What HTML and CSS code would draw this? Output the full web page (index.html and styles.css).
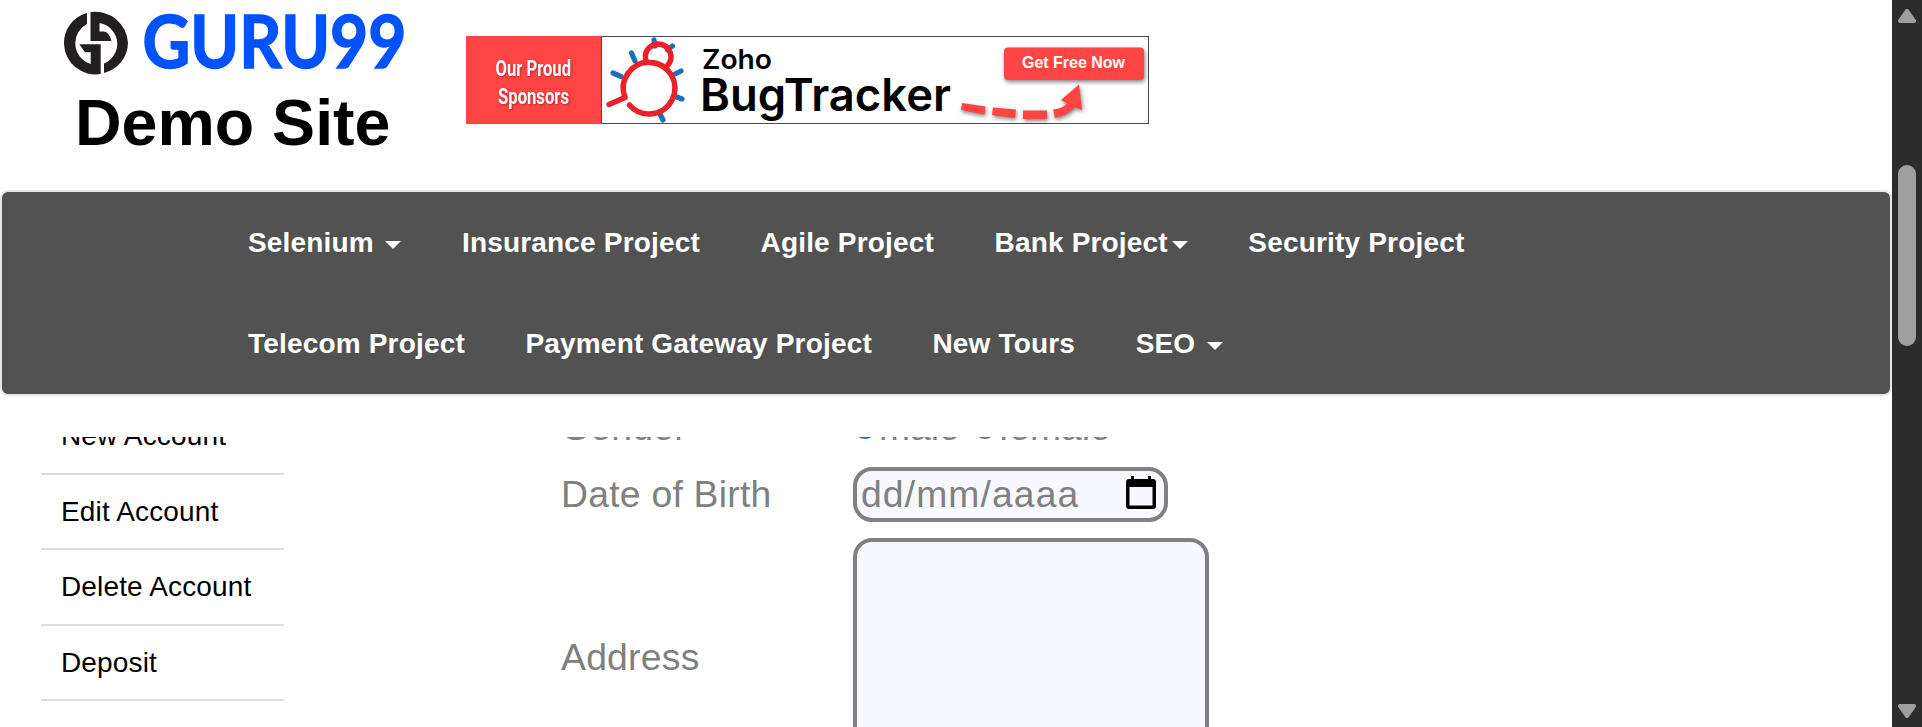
FILE: index.html
```html
<!DOCTYPE html>
<html lang="en">
<head>
<meta charset="utf-8">
<title>Guru99 Demo Site</title>
<link rel="stylesheet" href="styles.css">
</head>
<body>
<div class="page">
  <header class="top">
    <div class="brand">
      <svg class="logo" viewBox="0 0 380 76" width="380" height="76">
        <g fill="#231f20">
          <path d="M45 13A31 31 0 0 0 22 44A31.500 31.500 0 0 0 58.700 74V44.300H37.300L43 52.300H48.700V64A21.500 21.500 0 0 1 33.300 43.500A21.500 21.500 0 0 1 45 24Z"/>
          <path d="M48.500 12A33 33 0 0 1 86 43A31.500 31.500 0 0 1 62 73V63.500A21.500 21.500 0 0 0 75.300 43A21.500 21.500 0 0 0 57.500 23V31.500H62Q67 32 69.500 41H48.500Z"/>
        </g>
        <text class="logo-text" x="100.500" y="68" textLength="264" lengthAdjust="spacingAndGlyphs">GURU99</text>
      </svg>
      <h1 class="site-name">Demo Site</h1>
    </div>
    <svg class="banner" viewBox="466 36 683 88" width="683" height="88">
      <rect x="466" y="36" width="683" height="88" fill="#fff"/>
      <rect x="601.500" y="36.500" width="547" height="87" fill="#fff" stroke="#4a4a4a"/>
      <rect x="466" y="36" width="135" height="88" fill="#ff4444"/>
      <g class="sponsor">
        <text x="495.500" y="75.500" textLength="75.500" lengthAdjust="spacingAndGlyphs">Our Proud</text>
        <text x="498" y="104" textLength="71" lengthAdjust="spacingAndGlyphs">Sponsors</text>
      </g>
      <g fill="none" stroke-width="5.200" stroke-linecap="round" stroke="#1f6fb8">
        <path d="M654 40l1 6M672.500 46l-5 4M631.500 53l3.500 8M613 73l8 3.500M681 71l-8 4M682 99l-8-3M659 112l4 8"/>
      </g>
      <g fill="none" stroke="#e8212a" stroke-width="5.500" stroke-linecap="round" stroke-linejoin="round">
        <path d="M609 104.500L625 97.500A25.800 25.800 0 1 1 629.500 105"/>
        <path d="M645.500 58.500A12.800 12.800 0 1 1 668 65"/>
      </g>
      <text class="zoho" x="702" y="69" textLength="70" lengthAdjust="spacingAndGlyphs">Zoho</text>
      <text class="bug" x="700" y="111" textLength="251" lengthAdjust="spacingAndGlyphs">BugTracker</text>
      <g class="shadowed" fill="#ff4444">
        <rect x="1004" y="47.500" width="140" height="32.500" rx="4"/>
        <path d="M962 103l23.500 3.500-1 8-23.500-4.500zM993 107.500l23 2-1 8.500-23-3zM1023 110.500h24v8.500h-24zM1053 109.500q10-1 14-6l-6-3.500 18-15.500 3 25.500-7-3q-7 8-20 11z"/>
      </g>
      <text class="cta" x="1022" y="68" textLength="103" lengthAdjust="spacingAndGlyphs">Get Free Now</text>
    </svg>
  </header>
  <nav class="nav">
    <ul class="nav-row">
      <li>Selenium <i class="caret spaced"></i></li>
      <li>Insurance Project</li>
      <li>Agile Project</li>
      <li>Bank Project<i class="caret"></i></li>
      <li>Security Project</li>
    </ul>
    <ul class="nav-row">
      <li>Telecom Project</li>
      <li>Payment Gateway Project</li>
      <li>New Tours</li>
      <li>SEO <i class="caret spaced"></i></li>
    </ul>
  </nav>
  <main class="content">
    <ul class="side">
      <li>New Account</li>
      <li>Edit Account</li>
      <li>Delete Account</li>
      <li>Deposit</li>
    </ul>
    <form class="form">
      <div class="row gender">
        <span class="label">Gender</span>
        <span class="choices"><i class="radio on"></i><span class="male">male</span><i class="radio"></i><span>female</span></span>
      </div>
      <div class="row dob">
        <span class="label">Date of Birth</span>
        <div class="date"><span>dd/mm/aaaa</span>
          <svg class="calendar" viewBox="0 0 30 33" width="30" height="33">
            <path fill-rule="evenodd" d="M5 0h3v3h14V0h3v3h2q3 0 3 3v24q0 3-3 3H3q-3 0-3-3V6q0-3 3-3h2zM3.500 11v18.500h23V11z"/>
          </svg>
        </div>
      </div>
      <div class="row address">
        <span class="label">Address</span>
        <div class="area"></div>
      </div>
    </form>
  </main>
</div>
<aside class="scrollbar">
  <svg viewBox="0 0 18 14" width="18" height="14"><path d="M9 2L16 12H2z"/></svg>
  <div class="thumb"></div>
  <svg viewBox="0 0 18 14" width="18" height="14"><path d="M2 2H16L9 12z"/></svg>
</aside>
</body>
</html>
```
FILE: styles.css
```css
* { box-sizing: border-box; }
body { margin: 0; height: 727px; display: flex; overflow: hidden; background: #fff; font-family: "Liberation Sans", Arial, sans-serif; }
ul { list-style: none; margin: 0; padding: 0; }
.page { width: 1892px; height: 727px; display: flex; flex-direction: column; overflow: hidden; }
.top { height: 190px; flex: none; display: flex; align-items: flex-start; }
.brand { width: 466px; padding-left: 42px; flex: none; }
.logo { display: block; }
.logo-text { font: 700 72px Lato, sans-serif; fill: #0052ff; stroke: #0052ff; stroke-width: 1.500px; }
.site-name { margin: 10px 0 0 33px; font-size: 64.500px; line-height: 74px; font-weight: 700; white-space: nowrap; }
.banner { display: block; margin-top: 36px; }
.sponsor { font: 700 22.500px Roboto, sans-serif; fill: #fff; filter: drop-shadow(1px 1px 1px rgba(80, 0, 0, .4)); }
.zoho { font: 600 27px Inter, sans-serif; }
.bug { font: 600 45px Inter, sans-serif; }
.cta { font: 700 16px "Liberation Sans", sans-serif; fill: #fff; }
.shadowed { filter: drop-shadow(1px 2px 2px rgba(0, 0, 0, .5)); }
.nav { height: 206px; flex: none; border: 2px solid #e7e7e7; border-radius: 8px; background: #525252; color: #fff; padding-left: 246px; font-size: 28px; font-weight: 700; letter-spacing: .18px; }
.nav-row { display: flex; gap: 60.500px; height: 101px; padding-top: 35px; line-height: 32px; }
.nav-row li { white-space: nowrap; display: flex; }
.caret { border: 8px solid transparent; border-top-color: #fff; border-bottom: 0; align-self: flex-start; margin: 14px 0 0 4px; }
.caret.spaced { margin-left: 11.500px; }
.content { margin-top: 41px; height: 290px; overflow: hidden; display: flex; }
.side { width: 243px; margin: -38px 0 0 41px; font-size: 28px; line-height: 32px; letter-spacing: .15px; flex: none; }
.side li { height: 75.500px; border-bottom: 2px solid #ddd; padding: 21px 0 0 20px; }
.form { margin: -36px 0 0 277px; color: #808080; font-size: 37.300px; line-height: 44px; flex: none; }
.row { display: flex; }
.label { width: 292px; flex: none; letter-spacing: .25px; }
.gender { height: 66px; padding-top: 4px; }
.choices { display: flex; }
.radio { width: 24px; height: 24px; border: 3px solid #767676; border-radius: 50%; margin: 10px 2px 0 0; }
.radio.on { border-color: #0075ff; }
.male { margin-right: 13px; }
.dob { height: 71px; align-items: flex-start; }
.dob .label { padding-top: 5px; }
.date { width: 315px; height: 55px; border: 4px solid #808080; border-radius: 19px; background: #f8f8ff; display: flex; justify-content: space-between; padding: 1px 8px 0 4px; letter-spacing: 1.100px; }
.calendar { margin-top: 4px; fill: #000; }
.address { height: 240px; }
.address .label { padding-top: 97px; }
.area { width: 356px; height: 240px; border: 4px solid #808080; border-radius: 19px; background: #f8f8ff; }
.scrollbar { width: 30px; height: 727px; background: #2c2c2c; display: flex; flex-direction: column; padding: 9px 6px; }
.scrollbar svg { fill: #9f9f9f; stroke: #9f9f9f; stroke-width: 4px; stroke-linejoin: round; }
.thumb { margin: 142px 0 358px; height: 181px; flex: none; border-radius: 9px; background: #9f9f9f; }
```
